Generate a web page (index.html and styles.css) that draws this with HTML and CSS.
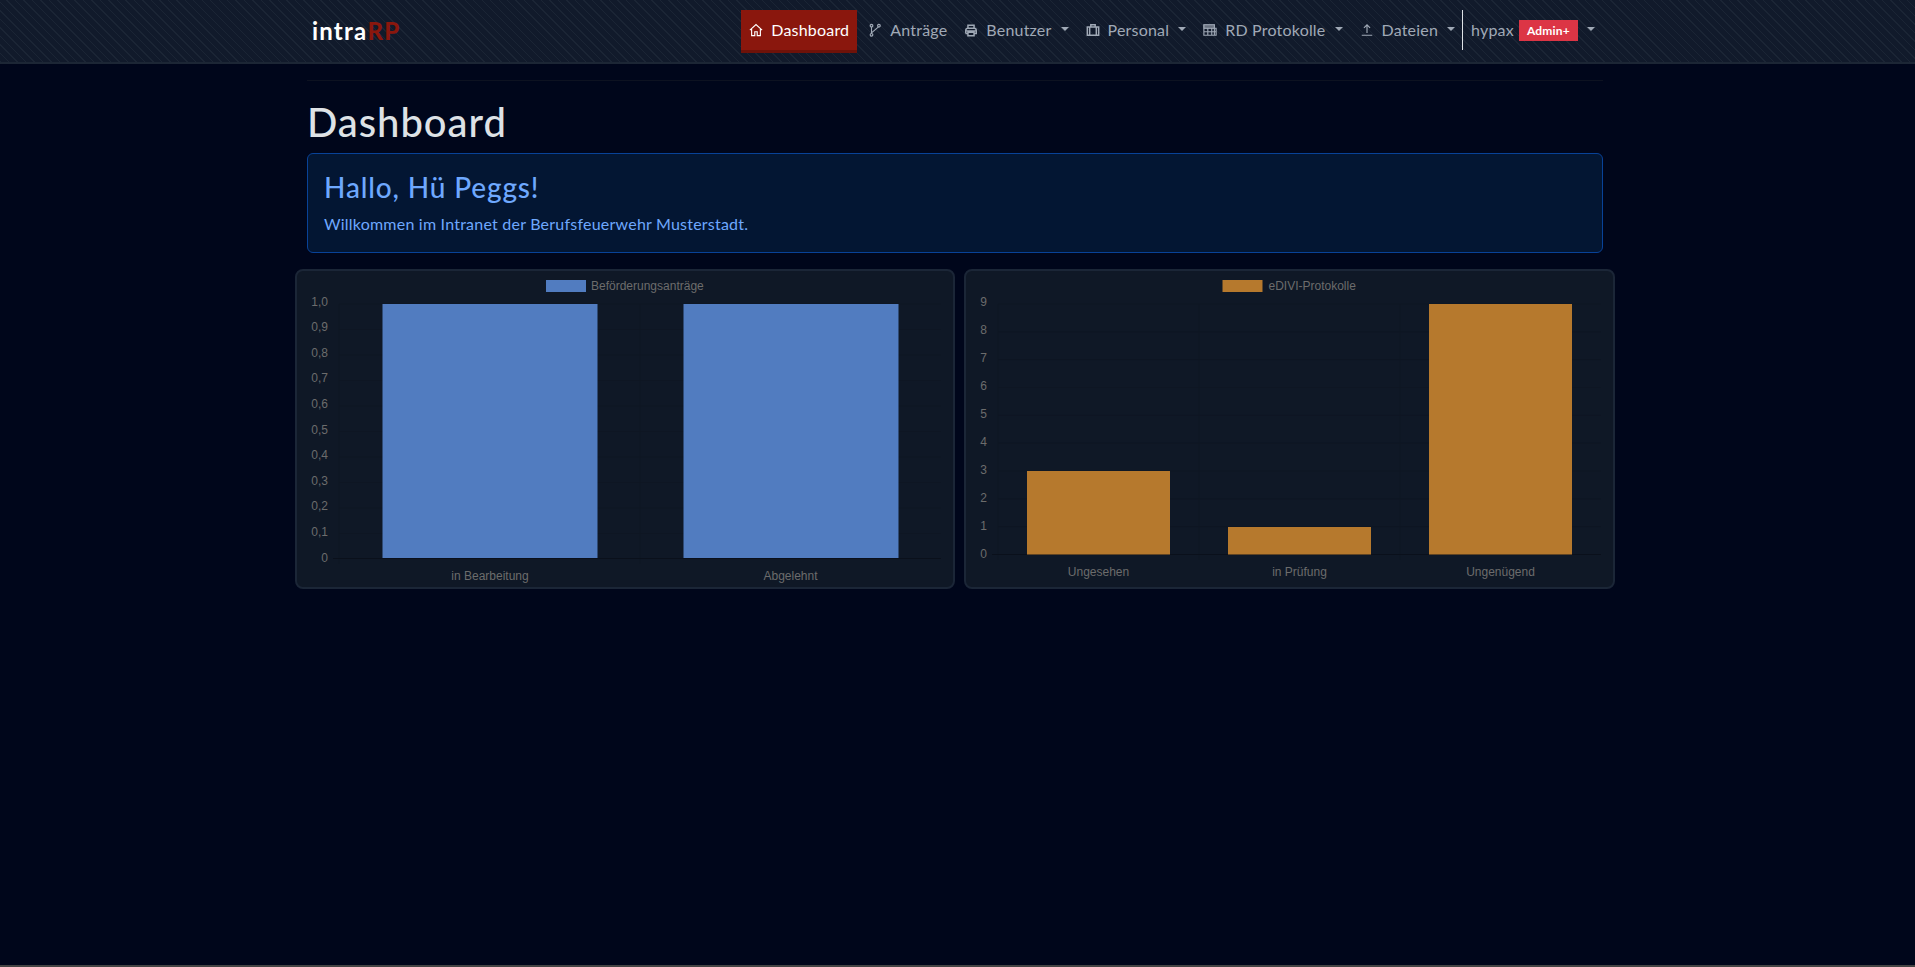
FILE: index.html
```html
<!DOCTYPE html>
<html>

	<head>
		<meta charset="UTF-8">
		<title>Dashboard</title>
		<link rel="stylesheet" href="styles.css">
	</head>

	<body>
		<nav class="navbar">
			<a class="brand" href="#">intra<span class="brand-rp">RP</span></a>
			<ul class="nav">
				<li class="nav-item active">
					<svg class="icon" viewBox="0 0 16 16"><path d="M1 8.200 8 1.800l7 6.400M3 6.800v7.700h3.600V10h2.800v4.500H13V6.800"/></svg>
					Dashboard
				</li>
				<li class="nav-item">
					<svg class="icon" viewBox="0 0 16 16"><circle cx="4" cy="3" r="1.500"/><circle cx="4" cy="13.500" r="1.500"/><circle cx="12.500" cy="3" r="1.500"/><path d="M4 4.500V12M12 4.500 4.300 11"/></svg>
					Anträge
				</li>
				<li class="nav-item caret">
					<svg class="icon thick" viewBox="0 0 16 16"><path d="M4.500 6V2.500h7V6M2 12V8.500Q2 6 4.500 6h7Q14 6 14 8.500V12h-2.500M4.500 12H2M4.500 10.500h7v4h-7zM1.500 9h13"/></svg>
					Benutzer
				</li>
				<li class="nav-item caret">
					<svg class="icon thick" viewBox="0 0 16 16"><path d="M1.500 4.500h13V14h-13zM5.500 4.500V2h5v2.500M4.200 4.500V14M11.800 4.500V14"/></svg>
					Personal
				</li>
				<li class="nav-item caret">
					<svg class="icon table" viewBox="0 0 16 16"><path class="table-head" d="M1 2h12v4H1z"/><path d="M1 2h12v12H1zM1 6h14v8H1zM1 10h14M5.500 6v8M10 6v8"/></svg>
					RD Protokolle
				</li>
				<li class="nav-item caret">
					<svg class="icon" viewBox="0 0 16 16"><path d="M8 11.500V2M4.500 5.500 8 2l3.500 3.500M2 14h12"/></svg>
					Dateien
				</li>
				<li class="nav-item user caret">
					hypax <span class="badge">Admin+</span>
				</li>
			</ul>
		</nav>

		<main class="page">
			<div class="head-line"></div>
			<h1 class="page-title">Dashboard</h1>
			<div class="welcome">
				<h4>Hallo, Hü Peggs!</h4>
				<p>Willkommen im Intranet der Berufsfeuerwehr Musterstadt.</p>
			</div>

			<div class="charts">
				<div class="chart-card">
					<svg class="chart" viewBox="0 0 660 320">
						<rect class="legend-blue" x="251" y="11" width="40" height="12"/>
						<text x="296" y="21">Beförderungsanträge</text>

						<g transform="translate(0 1)">
							<g class="grid">
								<path d="M44 34H646M44 59.500H646M44 85H646M44 110.500H646M44 136H646M44 161.500H646M44 187H646M44 212.500H646M44 238H646M44 263.500H646"/>
								<path d="M44 34V294M345 34V294"/>
							</g>
							<path class="axis" d="M38 288.500H646"/>

							<g class="y-labels">
								<text x="33" y="35.600">1,0</text>
								<text x="33" y="61.200">0,9</text>
								<text x="33" y="86.800">0,8</text>
								<text x="33" y="112.400">0,7</text>
								<text x="33" y="138">0,6</text>
								<text x="33" y="163.600">0,5</text>
								<text x="33" y="189.200">0,4</text>
								<text x="33" y="214.800">0,3</text>
								<text x="33" y="240.400">0,2</text>
								<text x="33" y="266">0,1</text>
								<text x="33" y="291.600">0</text>
							</g>

							<rect class="bar-blue" x="87.500" y="34" width="215" height="254"/>
							<rect class="bar-blue" x="388.500" y="34" width="215" height="254"/>

							<g class="x-labels">
								<text x="195" y="310">in Bearbeitung</text>
								<text x="495.500" y="310">Abgelehnt</text>
							</g>
						</g>
					</svg>
				</div>

				<div class="chart-card">
					<svg class="chart" viewBox="0 0 651 320">
						<rect class="legend-orange" x="258.500" y="11" width="40" height="12"/>
						<text x="304.500" y="21">eDIVI-Protokolle</text>

						<g transform="translate(0 1)">
							<g class="grid">
								<path d="M34 34H637M34 61.800H637M34 89.600H637M34 117.500H637M34 145.300H637M34 173.100H637M34 201H637M34 228.800H637M34 256.600H637"/>
								<path d="M34 34V290M235 34V290M436 34V290"/>
							</g>
							<path class="axis" d="M28 284.500H637"/>

							<g class="y-labels">
								<text x="23" y="35.700">9</text>
								<text x="23" y="63.700">8</text>
								<text x="23" y="91.700">7</text>
								<text x="23" y="119.700">6</text>
								<text x="23" y="147.700">5</text>
								<text x="23" y="175.700">4</text>
								<text x="23" y="203.700">3</text>
								<text x="23" y="231.700">2</text>
								<text x="23" y="259.700">1</text>
								<text x="23" y="287.700">0</text>
							</g>

							<rect class="bar-orange" x="63" y="201" width="143" height="83.500"/>
							<rect class="bar-orange" x="264" y="257" width="143" height="27.500"/>
							<rect class="bar-orange" x="465" y="34" width="143" height="250.500"/>

							<g class="x-labels">
								<text x="134.500" y="306">Ungesehen</text>
								<text x="335.500" y="306">in Prüfung</text>
								<text x="536.500" y="306">Ungenügend</text>
							</g>
						</g>
					</svg>
				</div>
			</div>
		</main>

		<div class="bottom-line"></div>
	</body>

</html>
```

FILE: styles.css
```css
* {
	margin: 0;
	padding: 0;
	box-sizing: border-box;
}

html,
body {
	height: 100%;
}

body {
	display: flex;
	flex-direction: column;
	overflow: hidden;
	background-color: #00061b;
	color: #dee2e6;
	font-family: "Lato", "Noto Sans", sans-serif;
	font-size: 16px;
}

.navbar {
	display: flex;
	align-items: center;
	justify-content: space-between;
	height: 64px;
	padding: 0 312px 2px 312px;
	flex-shrink: 0;
	background-color: #111a2b;
	background-image: repeating-linear-gradient(45deg, #1b2535 0, #1b2535 1px, transparent 1px, transparent 6px);
	border-bottom: 2px solid #1c2635;
}

.brand {
	color: #fff;
	font-size: 24px;
	font-weight: 700;
	letter-spacing: 1.2px;
	text-decoration: none;
}

.brand-rp {
	color: #8a170d;
	font-weight: 900;
}

.nav {
	display: flex;
	align-items: center;
	gap: 1px;
	margin-top: 2px;
	letter-spacing: .2px;
	list-style: none;
}

.nav-item {
	display: flex;
	align-items: center;
	height: 43px;
	padding: 0 8px;
	border-bottom: 3px solid transparent;
	color: #a0a9b6;
	white-space: nowrap;
}

.nav-item.active {
	margin-right: 2px;
	background-color: #8a170d;
	border-bottom-color: #6e1209;
	color: #fff;
}

.icon {
	width: 14px;
	height: 14px;
	margin-right: 8px;
	fill: none;
	stroke: currentColor;
	stroke-width: 1.300;
}

.icon.thick {
	stroke-width: 1.700;
}

.table-head {
	fill: currentColor;
	opacity: .6;
}

.caret::after {
	content: "";
	margin-left: 9px;
	margin-bottom: 2px;
	border-top: 4.800px solid currentColor;
	border-left: 4.800px solid transparent;
	border-right: 4.800px solid transparent;
}

.nav-item.user {
	height: 40px;
	margin-left: -2px;
	margin-bottom: 3px;
	padding-left: 8px;
	border-bottom: 0;
	border-left: 1px solid #dee2e6;
}

.badge {
	margin-top: 2px;
	margin-left: 5px;
	padding: 3px 8px;
	background-color: #dc3545;
	color: #fff;
	font-size: 12px;
	font-weight: 700;
}

.page {
	width: 1320px;
	margin-left: 295px;
}

.head-line {
	height: 1px;
	margin: 16px 12px 0;
	background-color: #0d1221;
}

.page-title {
	margin: 17px 12px 7px;
	font-size: 40px;
	font-weight: 500;
	letter-spacing: .95px;
	line-height: 48px;
}

.welcome {
	height: 100px;
	margin: 0 12px;
	padding: 16px;
	background-color: #031633;
	border: 1px solid #084298;
	border-radius: 6px;
	color: #6ea8fe;
}

.welcome h4 {
	margin-bottom: 10px;
	font-size: 28px;
	font-weight: 500;
	letter-spacing: .85px;
	line-height: 34px;
}

.welcome p {
	letter-spacing: .22px;
}

.charts {
	display: grid;
	grid-template-columns: 660px 651px;
	gap: 9px;
	margin-top: 16px;
}

.chart-card {
	height: 320px;
	background-color: #0f1826;
	border: 2px solid #1b2637;
	border-radius: 8px;
	overflow: hidden;
}

.chart {
	display: block;
	margin: -2px;
	width: calc(100% + 4px);
	height: 320px;
	font-family: "Liberation Sans", Arial, sans-serif;
	font-size: 12px;
	fill: #6c6c6c;
}

.grid path {
	fill: none;
	stroke: #0e1623;
	stroke-width: 1;
}

.axis {
	fill: none;
	stroke: #0a101b;
}

.y-labels text {
	text-anchor: end;
}

.x-labels text {
	text-anchor: middle;
}

.legend-blue,
.bar-blue {
	fill: #517cc0;
}

.legend-orange,
.bar-orange {
	fill: #b6792d;
}

.bottom-line {
	height: 2px;
	margin-top: auto;
	background-color: #444;
}
```
